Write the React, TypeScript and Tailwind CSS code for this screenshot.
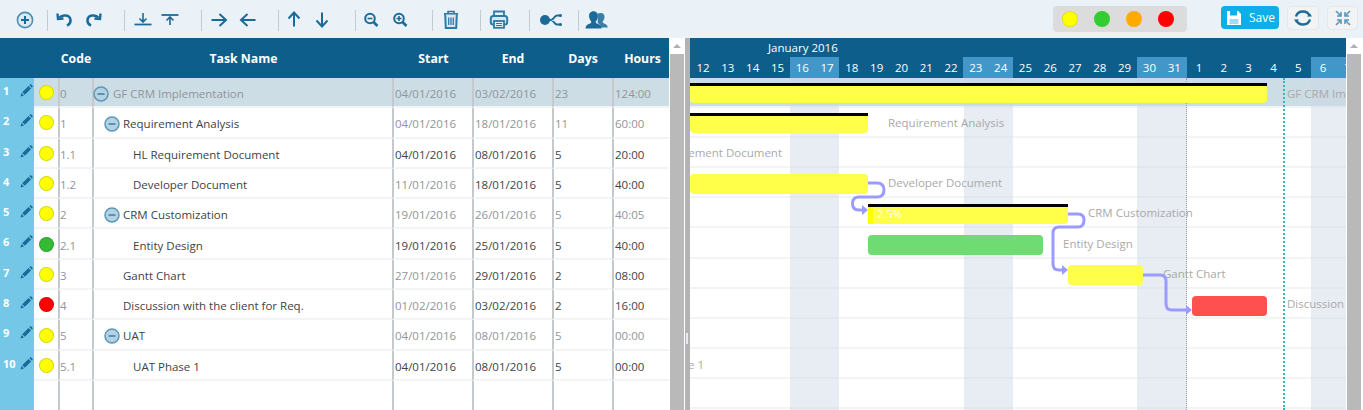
import React from "react";

const C = "#1c6a9a";

const Svg = ({ children }: { children: React.ReactNode }) => (
  <svg width="24" height="24" viewBox="0 0 24 24" fill="none" stroke={C} strokeWidth="2" strokeLinecap="butt" strokeLinejoin="miter" className="block overflow-visible">
    {children}
  </svg>
);

const icons: Record<string, React.ReactNode> = {
  add: (
    <g stroke="#4b8fb5">
      <circle cx="12" cy="12" r="7.6" strokeWidth="1.6" fill="#dceaf3" />
      <path d="M12 8v8M8 12h8" strokeWidth="2" stroke={C} />
    </g>
  ),
  undo: (
    <>
      <path d="M7.5 9.5C10 6.5 18 6.5 18.5 12C18.7 14.5 17 16.5 15 17.5" strokeWidth="2.6" />
      <path d="M5.5 5.5L6 11L11.5 10.5" strokeWidth="2.4" />
    </>
  ),
  redo: (
    <>
      <path d="M16.5 9.5C14 6.5 6 6.5 5.5 12C5.3 14.5 7 16.5 9 17.5" strokeWidth="2.6" />
      <path d="M18.5 5.5L18 11L12.5 10.5" strokeWidth="2.4" />
    </>
  ),
  below: (
    <>
      <path d="M3.5 16.5h17" strokeWidth="1.8" />
      <path d="M12 5v8.5M8.5 10.5l3.5 3.5 3.5-3.5" strokeWidth="1.6" />
    </>
  ),
  above: (
    <>
      <path d="M3.5 7h17" strokeWidth="1.8" />
      <path d="M12 17V9.5M8.5 12.5L12 9l3.5 3.5" strokeWidth="1.6" />
    </>
  ),
  right: <path d="M4.5 12h14M12.5 6l6.5 6-6.5 6" strokeWidth="2" />,
  left: <path d="M19.5 12h-14M11.5 6L5 12l6.5 6" strokeWidth="2" />,
  up: <path d="M12 18.5V5M6.500 10.500L12 4.500l5.500 6" strokeWidth="2" />,
  down: <path d="M12 4.500v13.500M6.500 12.500l5.500 6 5.500-6" strokeWidth="2" />,
  zoomOut: (
    <>
      <circle cx="11" cy="10.500" r="4.800" strokeWidth="2" />
      <path d="M8.500 10.500h5" strokeWidth="1.600" />
      <path d="M14.500 14l4 4" strokeWidth="2.600" />
    </>
  ),
  zoomIn: (
    <>
      <circle cx="11" cy="10.500" r="4.800" strokeWidth="2" />
      <path d="M8.500 10.500h5M11 8v5" strokeWidth="1.600" />
      <path d="M14.500 14l4 4" strokeWidth="2.600" />
    </>
  ),
  trash: (
    <g stroke="#2c7aa8">
      <path d="M5 6h14" strokeWidth="2" />
      <path d="M9 6V3.5h6V6" strokeWidth="1.6" />
      <path d="M6.2 6.5l.6 13.5h10.4l.6-13.5" strokeWidth="2" fill="#dbe8f0" />
      <path d="M9.7 9.5v7.5M12 9.5v7.5M14.3 9.5v7.5" strokeWidth="1.3" />
    </g>
  ),
  print: (
    <g stroke="#2c7aa8">
      <path d="M7 8V3.5h10V8" strokeWidth="1.8" />
      <rect x="3.8" y="8" width="16.4" height="8.5" rx="2.5" strokeWidth="2" fill="#dbe8f0" />
      <rect x="7" y="13" width="10" height="6.8" strokeWidth="1.8" fill="#eaf2f7" />
      <path d="M9 15.5h6M9 17.5h6" strokeWidth="1" />
    </g>
  ),
  link: (
    <>
      <circle cx="9" cy="12" r="5" fill={C} stroke="none" />
      <path d="M13 12h2C18 12 18 7.500 21 7.500h4M15 12C18 12 18 16.500 21 16.500h4" strokeWidth="2" />
      <circle cx="24.500" cy="7.500" r="1.500" fill={C} stroke="none" />
      <circle cx="24.500" cy="16.500" r="1.500" fill={C} stroke="none" />
    </>
  ),
  people: (
    <g stroke="none" fill={C}>
      <path d="M16 5c2.4 0 3.7 2 3.5 4.2-.2 2-1 3.4-1.8 4.3-.2 1 .4 1.4 2 2.2 1.4.7 3 1.2 3 3.8h-7c0-2.6-1.6-3.6-3-4.4.2-1 0-2 0-9.5C13.6 5.3 14.700 5 16 5z" opacity=".85" />
      <path d="M8.500 3.200c3 0 4.700 2.400 4.400 5.200-.2 2.400-1.200 4-2.200 5.100-.2 1.200.5 1.700 2.400 2.600 1.700.8 3.300 1.400 3.400 4.400H.500c.1-3 1.700-3.600 3.400-4.400 1.900-.9 2.600-1.400 2.400-2.600-1-1.100-2-2.700-2.200-5.100-.3-2.800 1.400-5.200 4.400-5.200z" />
    </g>
  ),
};

const Icon = ({ name }: { name: string }) => (
  <div className="w-6 h-6 shrink-0">
    <Svg>{icons[name]}</Svg>
  </div>
);

const Group = ({ cls, names }: { cls: string; names: string[] }) => (
  <div className={`flex items-center h-[21px] border-r border-[#c3ccd2] ${cls}`}>
    {names.map((n) => (
      <Icon key={n} name={n} />
    ))}
  </div>
);

const Pencil = () => (
  <svg width="13" height="13" viewBox="0 0 13 13" className="block">
    <path d="M0.5 12.500L1.500 9 4 11.500z" fill={C} />
    <path d="M2.200 8.200L8.500 1.900 11.100 4.500 4.800 10.800z" fill={C} />
    <path d="M9.300 1.100L10 .500c.4-.3.900-.3 1.200 0l1.300 1.300c.3.3.3.800 0 1.200l-.6.700z" fill={C} />
  </svg>
);

const Minus = () => (
  <svg width="16" height="16" viewBox="0 0 16 16" className="block">
    <circle cx="8" cy="8" r="7" fill="#b5d2e3" stroke="#5a97ba" strokeWidth="1.500" />
    <path d="M4.500 8h7" stroke="#3c7da3" strokeWidth="1.500" />
  </svg>
);

type Row = {
  n: number;
  color: string;
  code: string;
  name: string;
  level: 0 | 1 | 2;
  collapse?: boolean;
  start: string;
  end: string;
  days: string;
  hours: string;
  startDark?: boolean;
  endDark?: boolean;
};

const rows: Row[] = [
  { n: 1, color: "#ffff00", code: "0", name: "GF CRM Implementation", level: 0, collapse: true, start: "04/01/2016", end: "03/02/2016", days: "23", hours: "124:00" },
  { n: 2, color: "#ffff00", code: "1", name: "Requirement Analysis", level: 1, collapse: true, start: "04/01/2016", end: "18/01/2016", days: "11", hours: "60:00" },
  { n: 3, color: "#ffff00", code: "1.1", name: "HL Requirement Document", level: 2, start: "04/01/2016", end: "08/01/2016", days: "5", hours: "20:00", startDark: true, endDark: true },
  { n: 4, color: "#ffff00", code: "1.2", name: "Developer Document", level: 2, start: "11/01/2016", end: "18/01/2016", days: "5", hours: "40:00", endDark: true },
  { n: 5, color: "#ffff00", code: "2", name: "CRM Customization", level: 1, collapse: true, start: "19/01/2016", end: "26/01/2016", days: "5", hours: "40:05" },
  { n: 6, color: "#33bb33", code: "2.1", name: "Entity Design", level: 2, start: "19/01/2016", end: "25/01/2016", days: "5", hours: "40:00", startDark: true, endDark: true },
  { n: 7, color: "#ffff00", code: "3", name: "Gantt Chart", level: 1, start: "27/01/2016", end: "29/01/2016", days: "2", hours: "08:00", endDark: true },
  { n: 8, color: "#ff0000", code: "4", name: "Discussion with the client for Req.", level: 1, start: "01/02/2016", end: "03/02/2016", days: "2", hours: "16:00", endDark: true },
  { n: 9, color: "#ffff00", code: "5", name: "UAT", level: 1, collapse: true, start: "04/01/2016", end: "08/01/2016", days: "5", hours: "00:00" },
  { n: 10, color: "#ffff00", code: "5.1", name: "UAT Phase 1", level: 2, start: "04/01/2016", end: "08/01/2016", days: "5", hours: "00:00", startDark: true, endDark: true },
];

const grid = "grid grid-cols-[34px_24px_34px_300px_80px_80px_60px_57px]";
const sep = "border-l-2 border-[#c6c9cb]";
const cellB = `${sep} border-b-2 border-b-[#f3f4f5] pt-[3px] flex items-center`;
const GRAY = "text-[#8f9599]";
const DARK = "text-[#3d4347]";

const TableRow = ({ r }: { r: Row }) => {
  const first = r.n === 1;
  const parentGray = first ? GRAY : DARK;
  const numCls = r.endDark ? DARK : GRAY;
  return (
    <div className={`${grid} h-[30.3px] ${first ? "bg-[#cddde6]" : "bg-white"}`}>
      <div className="bg-[#74c7e6] flex items-start pt-[5px] pl-[3px] relative">
        <span className="text-white font-bold text-[11px] leading-4">{r.n}</span>
        <span className="absolute left-[20px] top-[6px]">
          <Pencil />
        </span>
      </div>
      <div className="flex items-center pl-[5px] pt-[1px] border-b-2 border-[#f3f4f5]">
        <span className="w-[15px] h-[15px] rounded-full border border-black/15" style={{ backgroundColor: r.color }} />
      </div>
      <div className={`${cellB} ${GRAY}`}>{r.code}</div>
      <div className={`${cellB} ${parentGray}`}>
        {r.level === 0 && <span className="-ml-px w-[20px] flex"><Minus /></span>}
        {r.level === 1 && <span className="ml-[10px] w-[19px] flex">{r.collapse && <Minus />}</span>}
        {r.level === 2 && <span className="ml-[39px]" />}
        <span className="whitespace-nowrap">{r.name}</span>
      </div>
      <div className={`${cellB} pl-px ${r.startDark ? DARK : GRAY}`}>{r.start}</div>
      <div className={`${cellB} pl-px ${r.endDark ? DARK : GRAY}`}>{r.end}</div>
      <div className={`${cellB} pl-px ${numCls}`}>{r.days}</div>
      <div className={`${cellB} pl-px ${numCls}`}>{r.hours}</div>
    </div>
  );
};

const days = [12, 13, 14, 15, 16, 17, 18, 19, 20, 21, 22, 23, 24, 25, 26, 27, 28, 29, 30, 31, 1, 2, 3, 4, 5, 6, 7];
const weekendIdx = new Set([4, 5, 11, 12, 18, 19, 25, 26]);

const Scrollbar = () => (
  <div className="w-4 shrink-0 bg-white flex flex-col items-center">
    <div className="h-4 flex items-center justify-center">
      <span className="w-0 h-0 border-x-[4px] border-x-transparent border-b-[4px] border-b-[#b0b0b0]" />
    </div>
    <div className="w-[14px] flex-1 bg-[#b9b9b9]" />
  </div>
);

const Label = ({ cls, children }: { cls: string; children: React.ReactNode }) => (
  <span className={`absolute whitespace-nowrap leading-4 text-[#a9a9a9] ${cls}`}>{children}</span>
);

export default function App() {
  return (
    <div className="w-[1363px] h-[410px] overflow-hidden flex flex-col bg-white font-['Open_Sans',sans-serif] text-[11.5px]">
      {/* Toolbar */}
      <div className="h-[38px] shrink-0 bg-[#eaf2f7] flex items-center pt-[2px]">
        <Group cls="w-[48px] pl-[13px]" names={["add"]} />
        <Group cls="w-[77px] pl-[4px] gap-[6px]" names={["undo", "redo"]} />
        <Group cls="w-[77px] pl-[6px] gap-[3px]" names={["below", "above"]} />
        <Group cls="w-[77px] pl-[5px] gap-[5px]" names={["right", "left"]} />
        <Group cls="w-[77px] pl-[3px] gap-[4px]" names={["up", "down"]} />
        <Group cls="w-[77px] pl-[3px] gap-[5px]" names={["zoomOut", "zoomIn"]} />
        <Group cls="w-[48px] pl-[6px]" names={["trash"]} />
        <Group cls="w-[49px] pl-[6px]" names={["print"]} />
        <Group cls="w-[49px] pl-[6px]" names={["link"]} />
        <div className="pl-[6px] flex items-center h-[21px]">
          <Icon name="people" />
        </div>
        <div className="ml-auto flex items-start self-start pt-[2px] mt-[2px] mr-[5px]">
          <div className="w-[134px] h-[26px] bg-[#dcdcdc] rounded-sm flex items-center pl-[9px] gap-[16px]">
            <span className="w-4 h-4 rounded-full bg-[#ffff00] border border-black/10" />
            <span className="w-4 h-4 rounded-full bg-[#33cc33]" />
            <span className="w-4 h-4 rounded-full bg-[#ffaa00]" />
            <span className="w-4 h-4 rounded-full bg-[#ff0000]" />
          </div>
          <div className="ml-[34px] w-[58px] h-[23px] bg-[#10aee8] rounded-sm flex items-center pl-[4px] text-white">
            <svg width="18" height="18" viewBox="0 0 18 18" className="block">
              <path d="M2 2h11l3 3v11H2z" fill="#fff" />
              <rect x="5" y="2" width="7" height="4.500" fill="#10aee8" />
              <rect x="4.500" y="10" width="9" height="5" fill="#9fdcf5" />
            </svg>
            <span className="ml-[6px] text-[12px] leading-4">Save</span>
          </div>
          <div className="ml-[8px] w-[32px] h-[24px] bg-[#f1f3f4] border border-[#e4e8ea] rounded-sm flex items-center justify-center">
            <svg width="20" height="20" viewBox="0 0 20 20" fill="none" stroke={C} strokeWidth="2.400" className="block">
              <path d="M3 8.500C4 5 7 3.500 10 3.500s5.500 1.500 6.800 4.500" />
              <path d="M17 11.500C16 15 13 16.500 10 16.500S4.500 15 3.200 12" />
              <path d="M14 8.500h5L17 5.500z" fill={C} stroke="none" />
              <path d="M6 11.500H1l2 3z" fill={C} stroke="none" />
            </svg>
          </div>
          <div className="ml-[8px] w-[31px] h-[24px] bg-[#f1f3f4] border border-[#e4e8ea] rounded-sm flex items-center justify-center">
            <svg width="18" height="18" viewBox="0 0 18 18" fill="none" stroke="#5b98bb" strokeWidth="1.600" className="block">
              <path d="M2 2l5 5M7 3v4H3M16 2l-5 5M11 3v4h4M2 16l5-5M7 15v-4H3M16 16l-5-5M11 15v-4h4" />
            </svg>
          </div>
        </div>
      </div>

      <div className="flex-1 min-h-0 flex">
        {/* Left table */}
        <div className="w-[669px] shrink-0 flex flex-col">
          <div className={`${grid} h-[40px] shrink-0 bg-[#0d5e8b] text-white font-bold text-[12.25px] pt-[2px]`}>
            <div />
            <div />
            <div className="flex items-center justify-center pl-[2px]">Code</div>
            <div className="flex items-center justify-center pl-[3px]">Task Name</div>
            <div className="flex items-center justify-center pl-[3px]">Start</div>
            <div className="flex items-center justify-center pl-[2px]">End</div>
            <div className="flex items-center justify-center pl-[2px]">Days</div>
            <div className="flex items-center justify-center pl-[4px]">Hours</div>
          </div>
          {rows.map((r) => (
            <TableRow key={r.n} r={r} />
          ))}
          <div className={`${grid} flex-1`}>
            <div className="bg-[#74c7e6]" />
            <div />
            <div className={sep} />
            <div className={sep} />
            <div className={sep} />
            <div className={sep} />
            <div className={sep} />
            <div className={sep} />
          </div>
        </div>

        <Scrollbar />

        {/* Splitter */}
        <div className="w-[5px] shrink-0 bg-[#b3b3b3] relative">
          <div className="absolute left-[1px] top-[295px] w-[2px] h-[11px] bg-[#e8e8f4]" />
        </div>

        {/* Gantt */}
        <div className="w-[656px] shrink-0 flex flex-col overflow-hidden">
          <div className="h-[40px] shrink-0 bg-[#0d5e8b] text-white flex flex-col overflow-hidden">
            <div className="h-[19px] pl-[78px] flex items-center">January 2016</div>
            <div className="h-[21px] flex pl-[0.7px]">
              {days.map((d, i) => (
                <div key={i} className={`w-[24.8px] shrink-0 flex items-center justify-center ${weekendIdx.has(i) ? "bg-[#4297c8]" : ""}`}>
                  {d}
                </div>
              ))}
            </div>
          </div>
          <div className="relative flex-1 overflow-hidden">
            {/* rows */}
            {Array.from({ length: 11 }).map((_, i) => (
              <div key={i} className={`h-[30.1px] border-b-2 border-[#f3f4f5] ${i === 0 ? "bg-[#cddde6]" : "bg-white"}`} />
            ))}
            {/* weekends */}
            <div className="absolute inset-y-0 left-[100px] w-[49px] bg-[#c9d6e4]/45" />
            <div className="absolute inset-y-0 left-[274px] w-[49px] bg-[#c9d6e4]/45" />
            <div className="absolute inset-y-0 left-[447px] w-[50px] bg-[#c9d6e4]/45" />
            <div className="absolute inset-y-0 left-[621px] w-[35px] bg-[#c9d6e4]/45" />
            {/* today / end lines */}
            <div className="absolute inset-y-0 left-[496px] border-l border-dotted border-[#9a9a9a]" />
            <div className="absolute inset-y-0 left-[593px] border-l-2 border-dotted border-[#2cbcb4]" />
            {/* labels */}
            <Label cls="left-[597px] top-[8px]">GF CRM Implementation</Label>
            <Label cls="left-[198px] top-[37px]">Requirement Analysis</Label>
            <Label cls="right-[564px] top-[67px]">HL Requirement Document</Label>
            <Label cls="left-[198px] top-[97px]">Developer Document</Label>
            <Label cls="left-[398px] top-[127px]">CRM Customization</Label>
            <Label cls="left-[373px] top-[158px]">Entity Design</Label>
            <Label cls="left-[473px] top-[188px]">Gantt Chart</Label>
            <Label cls="left-[597px] top-[218px]">Discussion</Label>
            <Label cls="right-[642px] top-[279px]">UAT Phase 1</Label>
            {/* bars */}
            <div className="absolute left-0 top-[5px] w-[577px] h-[20px] bg-[#ffff4a] border-t-[3px] border-black rounded-b-sm" />
            <div className="absolute left-0 top-[35px] w-[178px] h-[20px] bg-[#ffff4a] border-t-[3px] border-black rounded-b-sm" />
            <div className="absolute left-0 top-[96px] w-[178px] h-[20px] bg-[#ffff4a] rounded-sm" />
            <div className="absolute left-[178px] top-[126px] w-[200px] h-[20px] bg-[#ffff4a] border-t-[3px] border-black rounded-b-sm">
              <div className="absolute left-0 top-0 bottom-0 w-[5px] bg-[#ffff00]" />
              <span className="absolute left-[9px] top-[-1px] text-white text-[11px] leading-4">2.5%</span>
            </div>
            <div className="absolute left-[178px] top-[157px] w-[175px] h-[20px] bg-[#6edc72] rounded-sm" />
            <div className="absolute left-[378px] top-[187px] w-[75px] h-[20px] bg-[#ffff4a] rounded-sm" />
            <div className="absolute left-[502px] top-[218px] w-[75px] h-[20px] bg-[#ff5050] rounded-sm" />
            {/* links */}
            <svg width="656" height="332" viewBox="0 0 656 332" fill="none" className="absolute left-0 top-0">
              <g stroke="#9b9bff" strokeWidth="3">
                <path d="M178 105H187Q194 105 194 112Q194 119 187 119H169Q162.500 119 162.500 125.500Q162.500 132 169 132H174" />
                <path d="M378 136H388Q394 136 394 142Q394 149 388 149H369Q363 149 363 155V186Q363 192 369 192H374" />
                <path d="M453 197H470Q476 197 476 203V226Q476 232 482 232H497" />
              </g>
              <g fill="#9b9bff">
                <path d="M172 127L178 132L172 137z" />
                <path d="M372 187L378 192L372 197z" />
                <path d="M496 227L502 232L496 237z" />
              </g>
            </svg>
          </div>
        </div>
        <Scrollbar />
      </div>
    </div>
  );
}
